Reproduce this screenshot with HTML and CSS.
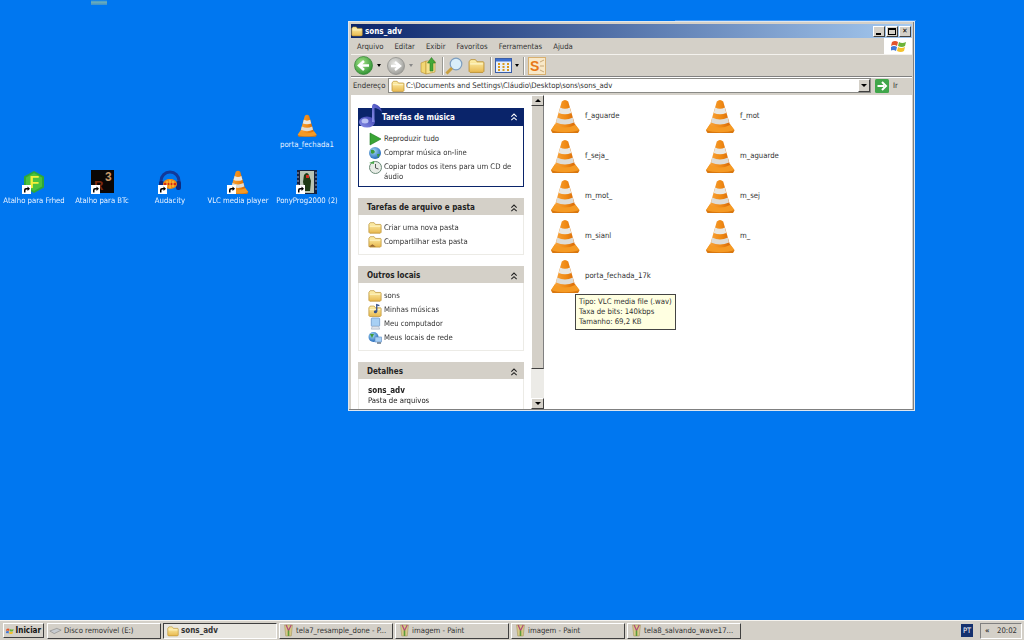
FILE: index.html
```html
<!DOCTYPE html>
<html lang="pt">
<head>
<meta charset="utf-8">
<title>sons_adv</title>
<link rel="stylesheet" href="styles.css">
</head>
<body>
<svg class="defs" width="0" height="0" aria-hidden="true">
  <defs>
    <linearGradient id="orange" x1="0" x2="1" y1="0" y2="0"><stop offset="0" stop-color="#f7a23a"/><stop offset=".55" stop-color="#f08a14"/><stop offset="1" stop-color="#d86a08"/></linearGradient>
    <linearGradient id="foldg" x1="0" x2="0" y1="0" y2="1"><stop offset="0" stop-color="#fff3b0"/><stop offset="1" stop-color="#e8b84e"/></linearGradient>
    <linearGradient id="noteg" x1="0" x2="1" y1="1" y2="0"><stop offset="0" stop-color="#8a90e8"/><stop offset="1" stop-color="#3a3fb0"/></linearGradient>
    <radialGradient id="greeng" cx=".4" cy=".35" r=".7"><stop offset="0" stop-color="#a6e58a"/><stop offset="1" stop-color="#2b8f2f"/></radialGradient>
    <radialGradient id="grayg" cx=".4" cy=".35" r=".7"><stop offset="0" stop-color="#e8e8e4"/><stop offset="1" stop-color="#9a9a96"/></radialGradient>
    <radialGradient id="globeg" cx=".4" cy=".35" r=".7"><stop offset="0" stop-color="#a8dcf4"/><stop offset="1" stop-color="#1d63b8"/></radialGradient>
    <symbol id="cone" viewBox="0 0 30 34">
      <path d="M1 31.5 5 25.5H25L29.5 31.5 28 34H2.500Z" fill="#d9770f"/>
      <path d="M1 31 5 25H25L29.500 31C22 34 8 34 1 31Z" fill="#f59a24"/>
      <path d="M11.800 2.500Q15 -.5 18.200 2.500L25 26Q15 31 5 26Z" fill="url(#orange)"/>
      <path d="M10.200 8.500Q15 11 19.800 8.500L21.300 14Q15 16.500 8.700 14Z" fill="#e9e7e2"/>
      <path d="M7.200 18.500Q15 22.500 22.800 18.500L24 23.500Q15 27.500 6 23.500Z" fill="#dedcd6"/>
    </symbol>
    <symbol id="folder" viewBox="0 0 16 14">
      <path d="M1 3.500 2.500 1.500H7L8.500 3.500H14.500L15 4.500V12.500L14 13.500H2L1 12.500Z" fill="url(#foldg)" stroke="#b98e2e" stroke-width=".8"/>
      <path d="M2 5.500H14" stroke="#fff8d0" stroke-width="1"/>
    </symbol>
    <symbol id="shortcut" viewBox="0 0 9 9">
      <rect width="9" height="9" fill="#fff"/>
      <path d="M2 7.500V5Q2 3 4 3H5.500V1.500L8 3.800 5.500 6V4.500H4.500Q3.500 4.500 3.500 5.500V7.500Z" fill="#000"/>
    </symbol>
    <symbol id="chev" viewBox="0 0 9 9">
      <path d="M1.500 4 4.500 1.200 7.500 4M1.500 8 4.500 5.200 7.500 8" fill="none" stroke="currentColor" stroke-width="1.200"/>
    </symbol>
    <symbol id="paint" viewBox="0 0 14 16">
      <path d="M2 1H12L10.500 15H3.500Z" fill="#d8c888" stroke="#9a8a50" stroke-width=".6"/>
      <path d="M4 1 7 8 10.500 1" fill="none" stroke="#b04a7a" stroke-width="1.500"/>
      <path d="M7 8V15" stroke="#5a9a3a" stroke-width="2"/>
    </symbol>
  </defs>
</svg>

<div class="screen">
  <div class="desktop">
    <div class="speck"></div>

    <div class="dicon dicon-frhed">
      <div class="dglyph">
        <svg width="24" height="24" viewBox="0 0 24 24"><path d="M12 1 22 6.500V17.500L12 23 2 17.500V6.500Z" fill="#2ea838"/><path d="M12 3 20 7.500V16.500L12 21 4 16.500V7.500Z" fill="#4cc23e"/><text x="7.500" y="18" class="glyph-f">F</text></svg>
        <svg class="sc" width="9" height="9"><use href="#shortcut"/></svg>
      </div>
      <span>Atalho para Frhed</span>
    </div>
    <div class="dicon dicon-btc">
      <div class="dglyph">
        <svg width="23" height="23" viewBox="0 0 23 23"><rect width="23" height="23" fill="#0b0705"/><text x="3" y="20" class="glyph-r">R</text><text x="14" y="11" class="glyph-3">3</text></svg>
        <svg class="sc" width="9" height="9"><use href="#shortcut"/></svg>
      </div>
      <span>Atalho para BTc</span>
    </div>
    <div class="dicon dicon-aud">
      <div class="dglyph">
        <svg width="24" height="24" viewBox="0 0 24 24"><path d="M3 15V11A9 9 0 0 1 21 11V15" fill="none" stroke="#123a9a" stroke-width="3"/><rect x="1" y="11" width="5" height="9" rx="2" fill="#0c2a80"/><rect x="18" y="11" width="5" height="9" rx="2" fill="#0c2a80"/><ellipse cx="12" cy="14" rx="7" ry="5" fill="#f08a14"/><path d="M6 14H18" stroke="#d92a10" stroke-width="2"/><path d="M9 11V17M12 10V18M15 11V17" stroke="#ffd040"/></svg>
        <svg class="sc" width="9" height="9"><use href="#shortcut"/></svg>
      </div>
      <span>Audacity</span>
    </div>
    <div class="dicon dicon-vlc">
      <div class="dglyph">
        <svg width="22" height="24"><use href="#cone"/></svg>
        <svg class="sc" width="9" height="9"><use href="#shortcut"/></svg>
      </div>
      <span>VLC media player</span>
    </div>
    <div class="dicon dicon-pony">
      <div class="dglyph">
        <svg width="22" height="24" viewBox="0 0 22 24"><rect x="1" width="20" height="24" fill="#16223e"/><rect x="4" y="1" width="14" height="22" fill="#b9c4b4"/><path d="M8 5Q11 1 13 5L15 11 14 21H9L7 12Z" fill="#1f3a14"/><path d="M10 5H13V8H10Z" fill="#d03020"/><path d="M2 2V22M20 2V22" stroke="#8fa0c8" stroke-dasharray="2 2"/></svg>
        <svg class="sc" width="9" height="9"><use href="#shortcut"/></svg>
      </div>
      <span>PonyProg2000 (2)</span>
    </div>
    <div class="dicon dicon-porta">
      <div class="dglyph">
        <svg width="20" height="23"><use href="#cone"/></svg>
      </div>
      <span>porta_fechada1</span>
    </div>

    <section class="window">
      <header class="titlebar">
        <svg width="12" height="12"><use href="#folder"/></svg>
        <span class="title">sons_adv</span>
        <div class="winbtns">
          <span class="winbtn"><i class="wb-min"></i></span>
          <span class="winbtn"><i class="wb-max"></i></span>
          <span class="winbtn wb-close">✕</span>
        </div>
      </header>

      <nav class="menubar">
        <span>Arquivo</span><span>Editar</span><span>Exibir</span><span>Favoritos</span><span>Ferramentas</span><span>Ajuda</span>
        <div class="flagbox">
          <svg width="15" height="14" viewBox="0 0 15 14"><path d="M1 3Q4 1 7 3L6 7Q3 5 0 7Z" fill="#e2532a"/><path d="M8 3Q11 5 15 3L14 7Q11 9 7 7Z" fill="#6cb33a"/><path d="M0 8Q3 6 6 8L5 12Q2 10 -1 12Z" fill="#3f78d8"/><path d="M7 8Q10 10 14 8L13 12Q10 14 6 12Z" fill="#f4c22c"/></svg>
        </div>
      </nav>

      <div class="toolbar">
        <svg class="tb-back" width="19" height="19" viewBox="0 0 19 19"><circle cx="9.500" cy="9.500" r="9" fill="url(#greeng)" stroke="#2f7f30" stroke-width=".7"/><path d="M15 9.500H7M10 5 5 9.500 10 14" fill="none" stroke="#fff" stroke-width="2.600"/></svg>
        <span class="drop"></span>
        <svg class="tb-fwd" width="18" height="18" viewBox="0 0 18 18"><circle cx="9" cy="9" r="8.500" fill="url(#grayg)" stroke="#8a8a86" stroke-width=".7"/><path d="M4 9H11M8 5 13 9 8 13" fill="none" stroke="#fff" stroke-width="2.400"/></svg>
        <span class="drop drop-off"></span>
        <svg class="tb-up" width="17" height="19" viewBox="0 0 17 19"><path d="M1 7 6 5V18L1 16Z" fill="#f2d773" stroke="#b9912f" stroke-width=".6"/><path d="M6 5H15V16L6 18Z" fill="#f7e28e" stroke="#b9912f" stroke-width=".6"/><path d="M10 15V7H7.500L11.500 1.500 15.500 7H13V15Z" fill="#43a838" stroke="#2d7a27" stroke-width=".6"/></svg>
        <i class="sep"></i>
        <svg class="tb-search" width="18" height="18" viewBox="0 0 18 18"><circle cx="11" cy="7" r="5.800" fill="#d8eefa" stroke="#7d9ec0" stroke-width="1.200"/><path d="M7 11 1.500 16.500" stroke="#c9a040" stroke-width="3"/></svg>
        <svg class="tb-folders" width="17" height="15"><use href="#folder"/></svg>
        <i class="sep"></i>
        <svg class="tb-views" width="17" height="15" viewBox="0 0 17 15"><rect x=".5" y=".5" width="16" height="14" fill="#e8f0fc" stroke="#3a5ea8"/><rect x="1" y="1" width="15" height="2.500" fill="#3d6fd0"/><path d="M3 6H5M7.500 6H9.500M12 6H14M3 9H5M7.500 9H9.500M12 9H14M3 12H5M7.500 12H9.500M12 12H14" stroke="#d89a20" stroke-width="2"/></svg>
        <span class="drop drop-views"></span>
        <i class="sep sep-views"></i>
        <svg class="tb-s" width="18" height="18" viewBox="0 0 18 18"><rect x=".5" y=".5" width="17" height="17" fill="#f8e8c8" stroke="#d8b070"/><text x="2" y="14" class="glyph-s">S</text><path d="M12 5 16 3M12 9H16M12 13 16 15" stroke="#c8a878"/></svg>
      </div>

      <div class="addressbar">
        <span class="addr-label">Endereço</span>
        <div class="addr-input">
          <svg width="14" height="12"><use href="#folder"/></svg>
          <span class="addr-path">C:\Documents and Settings\Cláudio\Desktop\sons\sons_adv</span>
          <span class="addr-drop"><i class="arrow-down"></i></span>
        </div>
        <svg class="go" width="14" height="14" viewBox="0 0 14 14"><rect width="14" height="14" rx="1.500" fill="#3fa64a"/><path d="M2.500 7H9M7 3 11 7 7 11" fill="none" stroke="#fff" stroke-width="2"/></svg>
        <span class="go-label">Ir</span>
      </div>

      <div class="main">
        <aside class="tasks">
          <div class="panel panel-music">
            <svg class="note" width="24" height="25" viewBox="0 0 24 25"><ellipse cx="8" cy="19" rx="8" ry="5.500" fill="url(#noteg)"/><ellipse cx="6" cy="18" rx="3.500" ry="2.500" fill="#b8c0f4"/><path d="M13 19V3Q14 0 16 1 22 3 23 9 19 5 15.500 5V19Z" fill="url(#noteg)"/></svg>
            <h2 class="panel-head head-dark"><span>Tarefas de música</span><svg width="8" height="8"><use href="#chev"/></svg></h2>
            <ul class="panel-body">
              <li><svg width="14" height="14" viewBox="0 0 14 14"><path d="M2 1 13 7 2 13Z" fill="#3aa535" stroke="#1d7a20" stroke-width=".6"/></svg><span>Reproduzir tudo</span></li>
              <li><svg width="14" height="14" viewBox="0 0 14 14"><circle cx="7" cy="7" r="6" fill="url(#globeg)"/><path d="M3 4Q6 3 7 6 5 9 3 7ZM9 8 12 8 10 12Z" fill="#3f9a3a"/></svg><span>Comprar música on-line</span></li>
              <li><svg width="14" height="14" viewBox="0 0 14 14"><circle cx="7.500" cy="7.500" r="6" fill="#e8ece6" stroke="#6a8a78"/><path d="M7.500 4V8L10.500 9" fill="none" stroke="#555" stroke-width="1"/><path d="M1 3 6 1V4Z" fill="#4aa84a"/></svg><span>Copiar todos os itens para um CD de áudio</span></li>
            </ul>
          </div>
          <div class="panel panel-file">
            <h2 class="panel-head"><span>Tarefas de arquivo e pasta</span><svg width="8" height="8"><use href="#chev"/></svg></h2>
            <ul class="panel-body">
              <li><svg width="14" height="13"><use href="#folder"/></svg><span>Criar uma nova pasta</span></li>
              <li><svg width="14" height="13" viewBox="0 0 16 14"><use href="#folder" width="16" height="14"/><path d="M1 13 5 10 9 13Z" fill="#9a6a30"/></svg><span>Compartilhar esta pasta</span></li>
            </ul>
          </div>
          <div class="panel panel-places">
            <h2 class="panel-head"><span>Outros locais</span><svg width="8" height="8"><use href="#chev"/></svg></h2>
            <ul class="panel-body">
              <li><svg width="14" height="13"><use href="#folder"/></svg><span>sons</span></li>
              <li><svg width="14" height="14" viewBox="0 0 16 16"><use href="#folder" y="2" width="16" height="14"/><path d="M10 10V2L13 3" fill="none" stroke="#34508a" stroke-width="1.500"/><circle cx="8.500" cy="10" r="1.800" fill="#34508a"/></svg><span>Minhas músicas</span></li>
              <li><svg width="14" height="14" viewBox="0 0 14 15"><rect x="3" y="1" width="9" height="9" rx="1" fill="#a8d0f4" stroke="#5a88c0" stroke-width=".7"/><path d="M4 10H11L12 13H3Z" fill="#e0e4ea" stroke="#8a9ab0" stroke-width=".5"/></svg><span>Meu computador</span></li>
              <li><svg width="14" height="14" viewBox="0 0 14 14"><circle cx="5.500" cy="6" r="5" fill="url(#globeg)"/><rect x="7" y="6" width="6.500" height="5" fill="#a8d0f4" stroke="#5a88c0" stroke-width=".6"/><path d="M9 12H13" stroke="#678" stroke-width="1.500"/><path d="M2 3 6 3 4 7Z" fill="#3f9a3a"/></svg><span>Meus locais de rede</span></li>
            </ul>
          </div>
          <div class="panel panel-details">
            <h2 class="panel-head"><span>Detalhes</span><svg width="8" height="8"><use href="#chev"/></svg></h2>
            <div class="details-body">
              <strong>sons_adv</strong>
              <span>Pasta de arquivos</span>
            </div>
          </div>
        </aside>

        <div class="scrollbar">
          <span class="sb-btn"><i class="arrow-up"></i></span>
          <span class="sb-thumb"></span>
          <span class="sb-track"></span>
          <span class="sb-btn"><i class="arrow-down"></i></span>
        </div>

        <div class="files">
          <div class="file"><svg width="30" height="34"><use href="#cone"/></svg><span>f_aguarde</span></div>
          <div class="file"><svg width="30" height="34"><use href="#cone"/></svg><span>f_mot</span></div>
          <div class="file"><svg width="30" height="34"><use href="#cone"/></svg><span>f_seja_</span></div>
          <div class="file"><svg width="30" height="34"><use href="#cone"/></svg><span>m_aguarde</span></div>
          <div class="file"><svg width="30" height="34"><use href="#cone"/></svg><span>m_mot_</span></div>
          <div class="file"><svg width="30" height="34"><use href="#cone"/></svg><span>m_sej</span></div>
          <div class="file"><svg width="30" height="34"><use href="#cone"/></svg><span>m_sianl</span></div>
          <div class="file"><svg width="30" height="34"><use href="#cone"/></svg><span>m_</span></div>
          <div class="file"><svg width="30" height="34"><use href="#cone"/></svg><span>porta_fechada_17k</span></div>
          <div class="tooltip">Tipo: VLC media file (.wav)<br>Taxa de bits: 140kbps<br>Tamanho: 69,2 KB</div>
        </div>
      </div>
    </section>
  </div>

  <footer class="taskbar">
    <button class="start">
      <svg width="12" height="12" viewBox="0 0 15 14"><path d="M1 3Q4 1 7 3L6 7Q3 5 0 7Z" fill="#e2532a"/><path d="M8 3Q11 5 15 3L14 7Q11 9 7 7Z" fill="#6cb33a"/><path d="M0 8Q3 6 6 8L5 12Q2 10 -1 12Z" fill="#3f78d8"/><path d="M7 8Q10 10 14 8L13 12Q10 14 6 12Z" fill="#f4c22c"/></svg>
      <b>Iniciar</b>
    </button>
    <div class="tasklist">
      <button class="task"><svg class="disk" width="13" height="10" viewBox="0 0 15 10"><path d="M1 5 9 2 14 4 6 8Z" fill="#c8ccd0" stroke="#777" stroke-width=".6"/></svg><span>Disco removível (E:)</span></button>
      <button class="task task-on"><svg width="12" height="12"><use href="#folder"/></svg><b>sons_adv</b></button>
      <button class="task"><svg width="11" height="13"><use href="#paint"/></svg><span>tela7_resample_done - P...</span></button>
      <button class="task"><svg width="11" height="13"><use href="#paint"/></svg><span>imagem - Paint</span></button>
      <button class="task"><svg width="11" height="13"><use href="#paint"/></svg><span>imagem - Paint</span></button>
      <button class="task"><svg width="11" height="13"><use href="#paint"/></svg><span>tela8_salvando_wave17...</span></button>
    </div>
    <span class="lang">PT</span>
    <div class="tray"><span class="tray-arrows">«</span><span>20:02</span></div>
  </footer>
</div>
</body>
</html>
```

FILE: styles.css
```css
* { box-sizing: border-box; }
html, body { margin: 0; padding: 0; height: 100%; overflow: hidden; }
body { font-family: "DejaVu Sans Condensed", "Liberation Sans", sans-serif; font-size: 7.700px; color: #222; }
.defs { position: absolute; }
.screen { width: 1024px; height: 640px; display: flex; flex-direction: column; background: #0077f0; filter: blur(.35px); }
.desktop { position: relative; flex: 1; }

.speck { position: absolute; left: 91px; top: 0; width: 16px; height: 5px; background: linear-gradient(#0077f0, #6fb0b8 40%, #3f90c8); }

.dicon { position: absolute; width: 76px; display: flex; flex-direction: column; align-items: center; gap: 2px; color: #e8f2ff; line-height: 10px; text-align: center; white-space: nowrap; }
.dglyph { position: relative; height: 24px; display: flex; }
.sc { position: absolute; left: 0; bottom: 0; }
.dicon-frhed { left: -4px; top: 170px; }
.dicon-btc { left: 64px; top: 170px; }
.dicon-aud { left: 132px; top: 170px; }
.dicon-vlc { left: 200px; top: 170px; }
.dicon-pony { left: 269px; top: 170px; }
.dicon-porta { left: 269px; top: 114px; }
.glyph-f { font: bold 16px "Liberation Sans", sans-serif; fill: #f4f03c; }
.glyph-r { font: bold 13px "Liberation Sans", sans-serif; fill: #7a2a10; }
.glyph-3 { font: bold 12px "Liberation Sans", sans-serif; fill: #c89a6a; }
.glyph-s { font: bold 14px "Liberation Sans", sans-serif; fill: #e87818; }

.window { position: absolute; left: 348px; top: 21px; width: 567px; height: 390px; padding: 2px 2px 1px; background: #d4d0c8; border: 1px solid #dfe6ee; display: flex; flex-direction: column; box-shadow: inset -1px -1px 0 #808080; }
.window::before { content: ""; position: absolute; left: 326px; top: -2px; width: 241px; height: 1px; background: #3f96f4; }
.titlebar { height: 14px; display: flex; align-items: center; gap: 2px; padding: 0 1px 0 0; background: linear-gradient(90deg, #0a246a, #a6caf0); color: #fff; flex: none; }
.title { font-weight: bold; font-size: 8px; }
.winbtns { margin-left: auto; display: flex; gap: 1px; }
.winbtn { width: 12px; height: 11px; background: #d4d0c8; border: 1px solid; border-color: #fff #404040 #404040 #fff; color: #000; position: relative; font-size: 7px; line-height: 9px; text-align: center; display: block; }
.wb-min { position: absolute; left: 2px; bottom: 1px; width: 5px; height: 2px; background: #000; }
.wb-max { position: absolute; left: 1px; top: 1px; width: 8px; height: 7px; border: 1px solid #000; border-top-width: 2px; }
.wb-close { font-weight: bold; }

.menubar { height: 17px; display: flex; align-items: center; gap: 11px; padding-left: 6px; flex: none; border-bottom: 1px solid #f4f2ee; color: #333; position: relative; }
.flagbox { position: absolute; right: 0; top: 0; width: 28px; height: 16px; background: #fff; display: flex; align-items: center; justify-content: center; }

.toolbar { height: 22px; display: flex; align-items: center; padding-left: 3px; flex: none; border-bottom: 1px solid #808080; }
.drop { width: 0; height: 0; border: 2px solid transparent; border-top: 3px solid #000; border-bottom: 0; margin: 0 6px 0 4px; }
.drop-off { border-top-color: #888; margin: 0 7px 0 4px; }
.drop-views { margin: 0 4px 0 3px; }
.sep { width: 1px; height: 18px; background: #9a9a94; margin: 0 1px 0 5px; border-right: 1px solid #fff; box-sizing: content-box; }
.sep-views { margin: 0 3px 0 0; }
.tb-folders { margin-left: 5px; }
.tb-views { margin-left: 2px; }

.addressbar { height: 18px; display: flex; align-items: center; flex: none; padding: 0 0 2px 2px; border-top: 1px solid #fff; }
.addr-label { width: 35px; color: #333; }
.addr-input { width: 483px; height: 15px; background: #fff; border: 1px solid #8a8a86; display: flex; align-items: center; gap: 1px; padding-left: 2px; position: relative; color: #333; }
.addr-path { white-space: nowrap; }
.addr-drop { margin-left: auto; width: 12px; height: 13px; background: #d4d0c8; border: 1px solid; border-color: #fff #404040 #404040 #fff; display: flex; align-items: center; justify-content: center; }
.go { margin-left: 4px; }
.go-label { margin-left: 4px; color: #333; }

.arrow-down, .arrow-up { display: block; width: 0; height: 0; border: 3px solid transparent; }
.arrow-down { border-top: 3px solid #000; border-bottom: 0; }
.arrow-up { border-bottom: 3px solid #000; border-top: 0; }

.main { flex: 1; min-height: 0; display: flex; background: #fff; overflow: hidden; }
.tasks { width: 180px; flex: none; padding: 13px 7px 0 7px; overflow: hidden; background: #fff; }
.panel { position: relative; margin-bottom: 11px; width: 166px; }
.panel-head { margin: 0; height: 17px; padding: 2px 6px 0 9px; font-size: 8px; font-weight: bold; display: flex; align-items: center; justify-content: space-between; background: #d4d0c8; color: #222; }
.head-dark { height: 18px; background: #0a246a; color: #fff; padding: 0 6px 0 24px; }
.panel-body { list-style: none; margin: 0; padding: 6px 8px 5px 9px; border: 1px solid #ecebe6; border-top: 0; display: flex; flex-direction: column; gap: 0; }
.panel-body li { display: flex; align-items: flex-start; gap: 2px; line-height: 10px; min-height: 14px; padding-top: 2px; color: #333; }
.panel-body li svg { flex: none; margin-top: -2px; }
.panel-music .panel-body { border-color: #0a246a; padding-bottom: 4px; }
.note { position: absolute; left: 1px; top: -5px; z-index: 1; }
.details-body { padding: 7px 9px; display: flex; flex-direction: column; line-height: 10px; border-left: 1px solid #ecebe6; border-right: 1px solid #ecebe6; }
.details-body strong { font-size: 8px; }

.scrollbar { width: 13px; flex: none; display: flex; flex-direction: column; background: #ecebe7; }
.sb-btn { height: 11px; flex: none; background: #d4d0c8; border: 1px solid; border-color: #fff #404040 #404040 #fff; display: flex; align-items: center; justify-content: center; }
.sb-thumb { height: 263px; flex: none; background: #d4d0c8; border-bottom: 1px solid #404040; border-right: 1px solid #808080; border-left: 1px solid #fff; }
.sb-track { flex: 1; }

.files { flex: 1; position: relative; display: grid; grid-template-columns: 155px 155px; grid-auto-rows: 40px; padding: 4px 0 0 6px; align-content: start; }
.file { display: flex; align-items: center; gap: 5px; height: 34px; color: #333; }
.file span { margin-top: -2px; }
.tooltip { position: absolute; left: 31px; top: 199px; width: 101px; height: 36px; padding: 2px 3px; background: #ffffe1; border: 1px solid #444; line-height: 10px; color: #333; white-space: nowrap; }

.taskbar { height: 20px; flex: none; background: #d4d0c8; border-top: 1px solid #f4f2ee; display: flex; align-items: center; padding: 0 2px 0 3px; }
button { font: inherit; color: #333; cursor: default; }
.start { width: 41px; height: 15px; padding: 0 2px; margin-right: 3px; display: flex; align-items: center; gap: 2px; background: #d4d0c8; border: 1px solid; border-color: #fff #404040 #404040 #fff; color: #111; font-size: 8px; }
.tasklist { display: flex; gap: 2px; }
.task { width: 114px; height: 16px; padding: 0 3px; display: flex; align-items: center; justify-content: flex-start; gap: 2px; background: #d4d0c8; border: 1px solid; border-color: #fff #404040 #404040 #fff; white-space: nowrap; overflow: hidden; }
.disk { margin-left: -2px; }
.task-on { background: #e8e6e0; border-color: #404040 #fff #fff #404040; }
.task-on b { font-size: 8px; }
.lang { margin-left: auto; width: 12px; height: 13px; background: #14306e; color: #fff; font-size: 7.500px; line-height: 13px; text-align: center; }
.tray { margin-left: 7px; width: 42px; height: 16px; border: 1px solid; border-color: #808080 #fff #fff #808080; display: flex; align-items: center; justify-content: space-between; padding: 0 4px; color: #333; }
.tray-arrows { font-weight: bold; }
```
